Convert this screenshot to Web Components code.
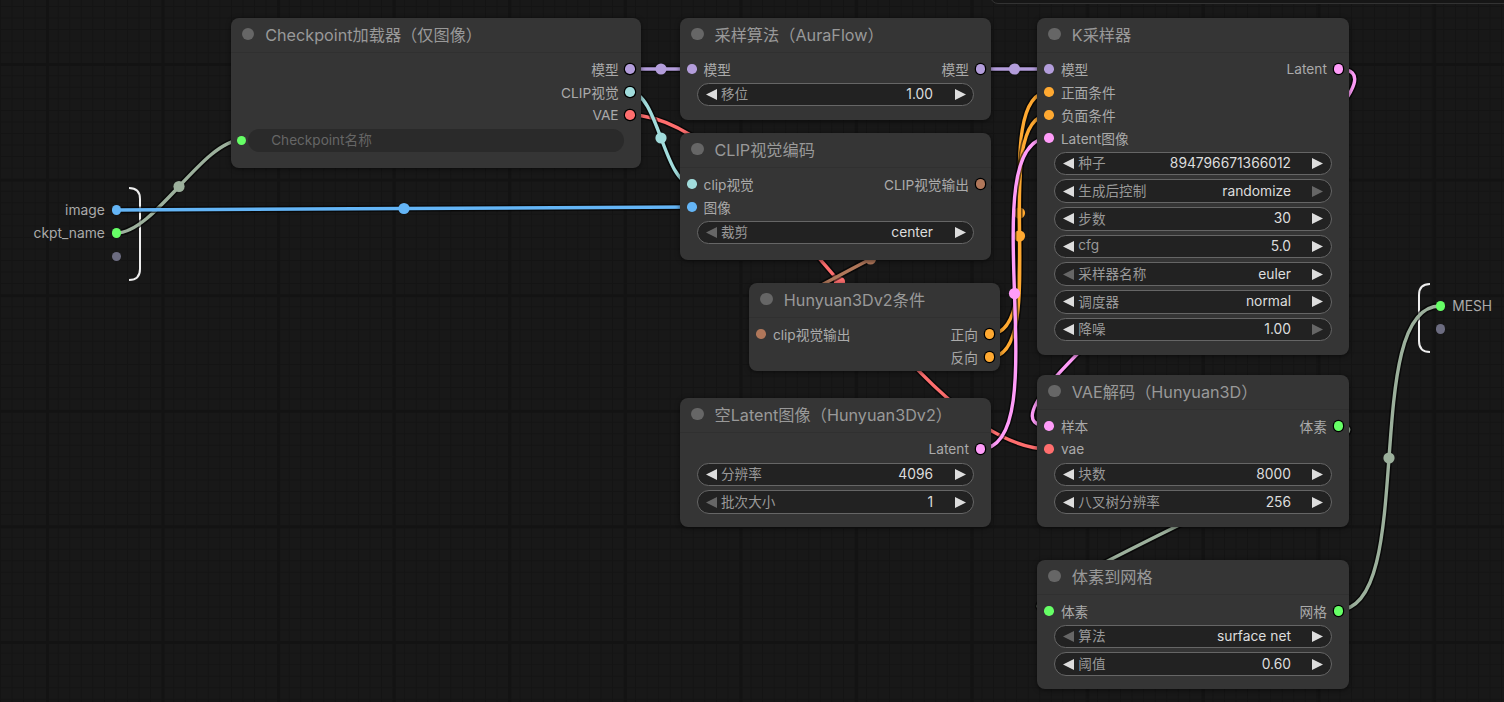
<!DOCTYPE html>
<html lang="zh">
<head>
<meta charset="utf-8">
<title>Hunyuan3D graph</title>
<style>
  html, body { margin: 0; height: 100%; background: #181818; overflow: hidden; }
</style>
</head>
<body>
<comfy-canvas>
  <comfy-panel></comfy-panel>
  <comfy-io side="left" x="20" y="187" h="94" labels="image,ckpt_name," colors="#64b5f6,#66ff66,#6c6c80"></comfy-io>
  <comfy-io side="right" x="1417" y="283" h="70" labels="MESH," colors="#66ff66,#6c6c80"></comfy-io>
  <comfy-links></comfy-links>

  <comfy-node x="230.7" y="18" w="410" h="150" title="Checkpoint加载器（仅图像）">
    <comfy-row out="模型" out-color="#b39ddb"></comfy-row>
    <comfy-row out="CLIP视觉" out-color="#a1dcdc"></comfy-row>
    <comfy-row out="VAE" out-color="#ff6e6e"></comfy-row>
    <comfy-widget flat dot="#66ff66" label="Checkpoint名称"></comfy-widget>
  </comfy-node>

  <comfy-node x="680" y="18" w="311" h="102" title="采样算法（AuraFlow）">
    <comfy-row in="模型" in-color="#b39ddb" out="模型" out-color="#b39ddb"></comfy-row>
    <comfy-widget label="移位" value="1.00"></comfy-widget>
  </comfy-node>

  <comfy-node x="680" y="133" w="311" h="127" title="CLIP视觉编码">
    <comfy-row in="clip视觉" in-color="#a1dcdc" out="CLIP视觉输出" out-color="#b0775a"></comfy-row>
    <comfy-row in="图像" in-color="#64b5f6"></comfy-row>
    <comfy-widget label="裁剪" value="center" no-left></comfy-widget>
  </comfy-node>

  <comfy-node x="1037.3" y="18" w="311.7" h="337" title="K采样器">
    <comfy-row in="模型" in-color="#b39ddb" out="Latent" out-color="#ff9cf9"></comfy-row>
    <comfy-row in="正面条件" in-color="#ffa931"></comfy-row>
    <comfy-row in="负面条件" in-color="#ffa931"></comfy-row>
    <comfy-row in="Latent图像" in-color="#ff9cf9"></comfy-row>
    <comfy-widget label="种子" value="894796671366012"></comfy-widget>
    <comfy-widget label="生成后控制" value="randomize" no-right></comfy-widget>
    <comfy-widget label="步数" value="30"></comfy-widget>
    <comfy-widget label="cfg" value="5.0"></comfy-widget>
    <comfy-widget label="采样器名称" value="euler" no-left></comfy-widget>
    <comfy-widget label="调度器" value="normal"></comfy-widget>
    <comfy-widget label="降噪" value="1.00" no-right></comfy-widget>
  </comfy-node>

  <comfy-node x="749.3" y="283" w="250.7" h="88" title="Hunyuan3Dv2条件">
    <comfy-row in="clip视觉输出" in-color="#b0775a" out="正向" out-color="#ffa931"></comfy-row>
    <comfy-row out="反向" out-color="#ffa931"></comfy-row>
  </comfy-node>

  <comfy-node x="680" y="398" w="311" h="129" title="空Latent图像（Hunyuan3Dv2）">
    <comfy-row out="Latent" out-color="#ff9cf9"></comfy-row>
    <comfy-widget label="分辨率" value="4096"></comfy-widget>
    <comfy-widget label="批次大小" value="1" no-left></comfy-widget>
  </comfy-node>

  <comfy-node x="1037.3" y="375" w="311.7" h="152" title="VAE解码（Hunyuan3D）">
    <comfy-row in="样本" in-color="#ff9cf9" out="体素" out-color="#66ff66"></comfy-row>
    <comfy-row in="vae" in-color="#ff6e6e"></comfy-row>
    <comfy-widget label="块数" value="8000"></comfy-widget>
    <comfy-widget label="八叉树分辨率" value="256"></comfy-widget>
  </comfy-node>

  <comfy-node x="1037.3" y="560" w="311.7" h="129" title="体素到网格">
    <comfy-row in="体素" in-color="#66ff66" out="网格" out-color="#66ff66"></comfy-row>
    <comfy-widget label="算法" value="surface net" no-left></comfy-widget>
    <comfy-widget label="阈值" value="0.60"></comfy-widget>
  </comfy-node>
</comfy-canvas>

<script>
const FONT = `Inter, "Noto Sans CJK SC", sans-serif`;

class ComfyCanvas extends HTMLElement {
  constructor() {
    super();
    this.attachShadow({ mode: "open" });
    this.shadowRoot.innerHTML = `
      <style>
        :host {
          display: block;
          position: relative;
          width: 1504px;
          height: 702px;
          overflow: hidden;
          font-family: ${FONT};
          background-color: #181818;
          background-image:
            linear-gradient(to right, #131313 3px, transparent 3px),
            linear-gradient(to bottom, #131313 3px, transparent 3px),
            linear-gradient(to right, #141414 1px, transparent 1px),
            linear-gradient(to bottom, #141414 1px, transparent 1px);
          background-size: 115.6px 115.6px, 115.6px 115.6px, 11.56px 11.56px, 11.56px 11.56px;
          background-position: 46px 63px, 46px 63px, 0 6px, 0 6px;
        }
      </style>
      <slot></slot>`;
  }
}

class ComfyPanel extends HTMLElement {
  constructor() {
    super();
    this.attachShadow({ mode: "open" });
    this.shadowRoot.innerHTML = `
      <style>
        :host {
          position: absolute;
          left: 990px;
          top: -20px;
          width: 540px;
          height: 24px;
          box-sizing: border-box;
          border: 1px solid #333;
          border-radius: 8px;
          background: #161616;
        }
      </style>`;
  }
}

class ComfyIo extends HTMLElement {
  constructor() {
    super();
    this.attachShadow({ mode: "open" });
  }

  connectedCallback() {
    const left = this.getAttribute("side") === "left";
    const h = +this.getAttribute("h");
    const labels = this.getAttribute("labels").split(",");
    const colors = this.getAttribute("colors").split(",");
    const rows = labels.map((label, i) => `
      <div class="io-row">
        ${left ? `<span>${label}</span>` : ""}
        <i style="background:${colors[i]}"></i>
        ${left ? "" : `<span>${label}</span>`}
      </div>`).join("");
    const d = left
      ? `M1 1 C8 1 12 4 12 12 L12 ${h - 12} C12 ${h - 4} 8 ${h - 1} 1 ${h - 1}`
      : `M13 1 C6 1 2 4 2 12 L2 ${h - 12} C2 ${h - 4} 6 ${h - 1} 13 ${h - 1}`;
    this.shadowRoot.innerHTML = `
      <style>
        :host {
          position: absolute;
          left: ${this.getAttribute("x")}px;
          top: ${this.getAttribute("y")}px;
          height: ${h}px;
        }
        svg {
          position: absolute;
          top: 0;
          ${left ? "left: 107.5px" : "left: 0"};
          z-index: 0;
        }
        .rows {
          position: relative;
          z-index: 2;
          display: flex;
          flex-direction: column;
          ${left ? "width: 101.2px; align-items: flex-end;" : "padding-left: 18.8px;"}
          padding-top: 11.2px;
        }
        .io-row {
          display: flex;
          align-items: center;
          gap: 6.8px;
          height: 23.3px;
          font-size: 13.8px;
          color: #aaa;
        }
        i {
          width: 9.6px;
          height: 9.6px;
          border-radius: 50%;
          flex: none;
        }
      </style>
      <svg width="15" height="${h}"><path d="${d}" fill="none" stroke="#eee" stroke-width="2"/></svg>
      <div class="rows">${rows}</div>`;
  }
}

class ComfyLinks extends HTMLElement {
  constructor() {
    super();
    this.attachShadow({ mode: "open" });
  }

  connectedCallback() {
    const green = "#9cb09c";
    const links = [
      [116, 233, 242, 140, green],
      [116, 210, 692, 207, "#64b5f6"],
      [630, 69, 692, 69, "#b39ddb"],
      [980, 69, 1049, 69, "#b39ddb"],
      [630, 115, 1049, 449, "#ff6e6e"],
      [630, 92, 692, 184, "#a1dcdc"],
      [980, 184, 761, 334, "#b0775a"],
      [990, 334, 1049, 92, "#ffa931"],
      [990, 357, 1049, 115, "#ffa931"],
      [1338, 69, 1049, 426, "#ff9cf9"],
      [980, 449, 1049, 138, "#ff9cf9"],
      [1338, 426, 1049, 610, green],
      [1338, 610, 1440, 306, green],
    ];
    const paths = links.map(([x1, y1, x2, y2, color]) => {
      const dist = Math.hypot(x2 - x1, y2 - y1) * 0.25;
      const d = `M${x1} ${y1} C${x1 + dist} ${y1} ${x2 - dist} ${y2} ${x2} ${y2}`;
      const mx = (x1 + 3 * (x1 + dist) + 3 * (x2 - dist) + x2) / 8;
      const my = (y1 + y2) / 2;
      return `
        <path d="${d}" fill="none" stroke="#000" stroke-opacity=".6" stroke-width="6.5"/>
        <path d="${d}" fill="none" stroke="${color}" stroke-width="3.4"/>
        <circle cx="${mx}" cy="${my}" r="5.6" fill="${color}"/>`;
    }).join("");
    this.shadowRoot.innerHTML = `
      <style>
        :host { position: absolute; left: 0; top: 0; z-index: 1; display: block; }
        svg { display: block; }
      </style>
      <svg width="1504" height="702">${paths}</svg>`;
  }
}

class ComfyNode extends HTMLElement {
  constructor() {
    super();
    this.attachShadow({ mode: "open" });
  }

  connectedCallback() {
    this.shadowRoot.innerHTML = `
      <style>
        :host {
          position: absolute;
          z-index: 3;
          left: ${this.getAttribute("x")}px;
          top: ${this.getAttribute("y")}px;
          width: ${this.getAttribute("w")}px;
          height: ${this.getAttribute("h")}px;
          display: flex;
          flex-direction: column;
          background: #353535;
          border-radius: 8px;
          box-shadow: 0 1px 5px rgba(0, 0, 0, .55);
        }
        .header {
          flex: none;
          height: 35px;
          box-sizing: border-box;
          display: flex;
          align-items: center;
          gap: 11px;
          padding: 0 0 2px 11px;
          border-bottom: 1px solid #303030;
          font-size: 16.2px;
          color: #999;
          white-space: nowrap;
        }
        .dot {
          width: 12.5px;
          height: 12.5px;
          border-radius: 50%;
          background: #666;
          flex: none;
        }
        .body {
          display: flex;
          flex-direction: column;
          padding-top: 4.5px;
        }
      </style>
      <div class="header"><span class="dot"></span><span>${this.getAttribute("title")}</span></div>
      <div class="body"><slot></slot></div>`;
  }
}

class ComfyRow extends HTMLElement {
  constructor() {
    super();
    this.attachShadow({ mode: "open" });
  }

  connectedCallback() {
    const input = this.getAttribute("in");
    const output = this.getAttribute("out");
    this.shadowRoot.innerHTML = `
      <style>
        :host {
          display: flex;
          justify-content: space-between;
          align-items: center;
          height: 23px;
          padding: 0 5.7px 0 7.2px;
          font-size: 13.7px;
          color: #aaa;
          white-space: nowrap;
        }
        .side { display: flex; align-items: center; gap: 6.8px; }
        i { width: 9.6px; height: 9.6px; border-radius: 50%; flex: none; }
        .out i { box-shadow: 0 0 0 1.2px #000; }
      </style>
      <div class="side">${input !== null ? `<i style="background:${this.getAttribute("in-color")}"></i><span>${input}</span>` : ""}</div>
      <div class="side out">${output !== null ? `<span>${output}</span><i style="background:${this.getAttribute("out-color")}"></i>` : ""}</div>`;
  }
}

class ComfyWidget extends HTMLElement {
  constructor() {
    super();
    this.attachShadow({ mode: "open" });
  }

  connectedCallback() {
    const flat = this.hasAttribute("flat");
    const dot = this.getAttribute("dot");
    const arrow = (points, off) =>
      `<svg class="arrow" width="11" height="11" viewBox="0 0 11 11"><polygon points="${points}" fill="${off ? "#666" : "#ddd"}"/></svg>`;
    const inner = flat
      ? `<span class="label flat-label">${this.getAttribute("label")}</span>`
      : `${arrow("0,5.5 11,0 11,11", this.hasAttribute("no-left"))}
         <span class="label">${this.getAttribute("label")}</span>
         <span class="value">${this.getAttribute("value")}</span>
         ${arrow("0,0 11,5.5 0,11", this.hasAttribute("no-right"))}`;
    this.shadowRoot.innerHTML = `
      <style>
        :host {
          display: flex;
          align-items: center;
          position: relative;
          height: 23.7px;
          box-sizing: border-box;
          margin: 2px 17px;
          padding: 0 7.5px;
          border-radius: 12px;
          font-size: 13.6px;
          white-space: nowrap;
          background: ${flat ? "#2a2a2a" : "#222"};
          border: ${flat ? "none" : "1px solid #666"};
        }
        .arrow { flex: none; }
        .label { color: #999; margin-left: 4.5px; padding-bottom: 2px; }
        .flat-label { color: #666; margin-left: 16px; }
        .value { color: #ddd; margin-left: auto; margin-right: 21.5px; font-size: 13.8px; padding-bottom: .6px; }
        .pin {
          position: absolute;
          left: -10.8px;
          top: 7.2px;
          width: 9.6px;
          height: 9.6px;
          border-radius: 50%;
        }
      </style>
      ${dot ? `<span class="pin" style="background:${dot}"></span>` : ""}
      ${inner}`;
  }
}

customElements.define("comfy-canvas", ComfyCanvas);
customElements.define("comfy-panel", ComfyPanel);
customElements.define("comfy-io", ComfyIo);
customElements.define("comfy-links", ComfyLinks);
customElements.define("comfy-node", ComfyNode);
customElements.define("comfy-row", ComfyRow);
customElements.define("comfy-widget", ComfyWidget);
</script>
</body>
</html>
